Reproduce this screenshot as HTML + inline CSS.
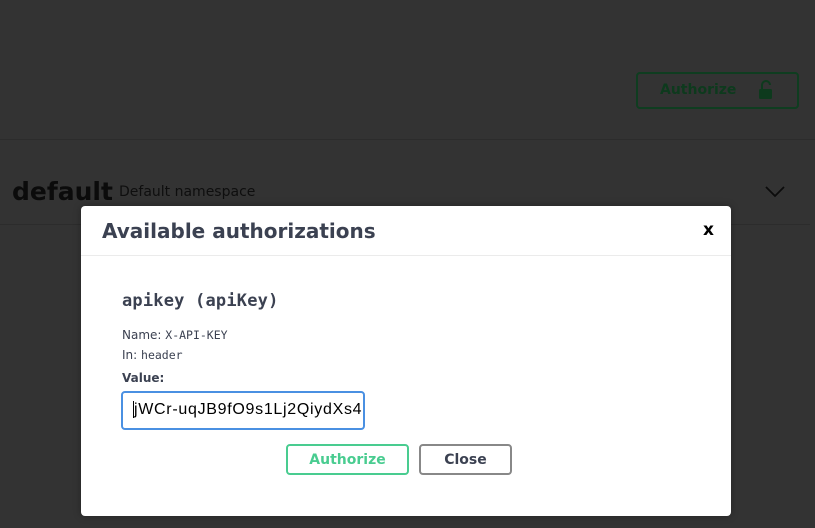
<!DOCTYPE html>
<html><head><style>
*{box-sizing:border-box;margin:0;padding:0}
body{width:815px;height:528px;overflow:hidden;background:#333333;font-family:"DejaVu Sans","Liberation Sans",sans-serif;position:relative}
.abs{position:absolute}
</style></head><body>
<div class="abs" style="left:0;top:139px;width:815px;height:1px;background:#2c2c2c"></div>
<div class="abs" style="left:636px;top:72px;width:163px;height:37px;border:2px solid #0f3d20;border-radius:4px"></div>
<div class="abs" style="left:660px;top:82px;font-size:14px;font-weight:bold;color:#0d3a1d">Authorize</div>
<svg class="abs" style="left:758px;top:80px" width="16" height="20" viewBox="0 0 16 20"><path d="M4 9V5a4 4 0 0 1 8 0" fill="none" stroke="#0d3a1d" stroke-width="2"/><rect x="1" y="9" width="13" height="10" rx="1.5" fill="#0d3a1d"/></svg>
<div class="abs" style="left:12px;top:177px;font-size:25px;font-weight:bold;color:#0b0b0b">default</div>
<div class="abs" style="left:119px;top:184px;font-size:14px;color:#0e0e0e">Default namespace</div>
<svg class="abs" style="left:764px;top:184px" width="22" height="14"><path d="M2 3l9 9 9-9" fill="none" stroke="#0b0b0b" stroke-width="1.8"/></svg>
<div class="abs" style="left:0;top:224px;width:810px;height:1px;background:#2c2c2c"></div>

<div class="abs" style="left:81px;top:206px;width:650px;height:310px;background:#fff;border-radius:4px;box-shadow:0 0 8px rgba(0,0,0,.3)">
  <div class="abs" style="left:21px;top:13px;font-size:20px;font-weight:bold;color:#3b4151">Available authorizations</div>
  <div class="abs" style="left:622px;top:14px;font-size:17px;font-weight:bold;color:#000">x</div>
  <div class="abs" style="left:0;top:49px;width:650px;height:1px;background:#ebebeb"></div>
  <div class="abs" style="left:41px;top:85px;font-size:17px;font-weight:bold;color:#3b4151;font-family:'DejaVu Sans Mono',monospace;letter-spacing:0.2px">apikey (apiKey)</div>
  <div class="abs" style="left:41px;top:122px;font-size:12px;color:#3b4151">Name: <span style="font-family:'DejaVu Sans Mono',monospace;font-size:11.5px">X-API-KEY</span></div>
  <div class="abs" style="left:41px;top:142px;font-size:12px;color:#3b4151">In: <span style="font-family:'DejaVu Sans Mono',monospace;font-size:11.5px">header</span></div>
  <div class="abs" style="left:41px;top:165px;font-size:12px;font-weight:bold;color:#3b4151">Value:</div>
  <div class="abs" style="left:40px;top:185px;width:244px;height:39px;border:2px solid #4a90e2;border-radius:4px;overflow:hidden;white-space:nowrap;padding:8px 0 0 10px;font-size:16px;color:#000;font-family:'Liberation Sans',sans-serif;letter-spacing:0.7px"><span style="border-left:1px solid #000">jWCr-uqJB9fO9s1Lj2QiydXs4</span></div>
  <div class="abs" style="left:205px;top:238px;width:123px;height:31px;border:2px solid #49cc90;border-radius:4px;text-align:center;line-height:28px;font-size:14px;font-weight:bold;color:#49cc90">Authorize</div>
  <div class="abs" style="left:338px;top:238px;width:93px;height:31px;border:2px solid #888;border-radius:4px;text-align:center;line-height:28px;font-size:14px;font-weight:bold;color:#3b4151">Close</div>
</div>
</body></html>
